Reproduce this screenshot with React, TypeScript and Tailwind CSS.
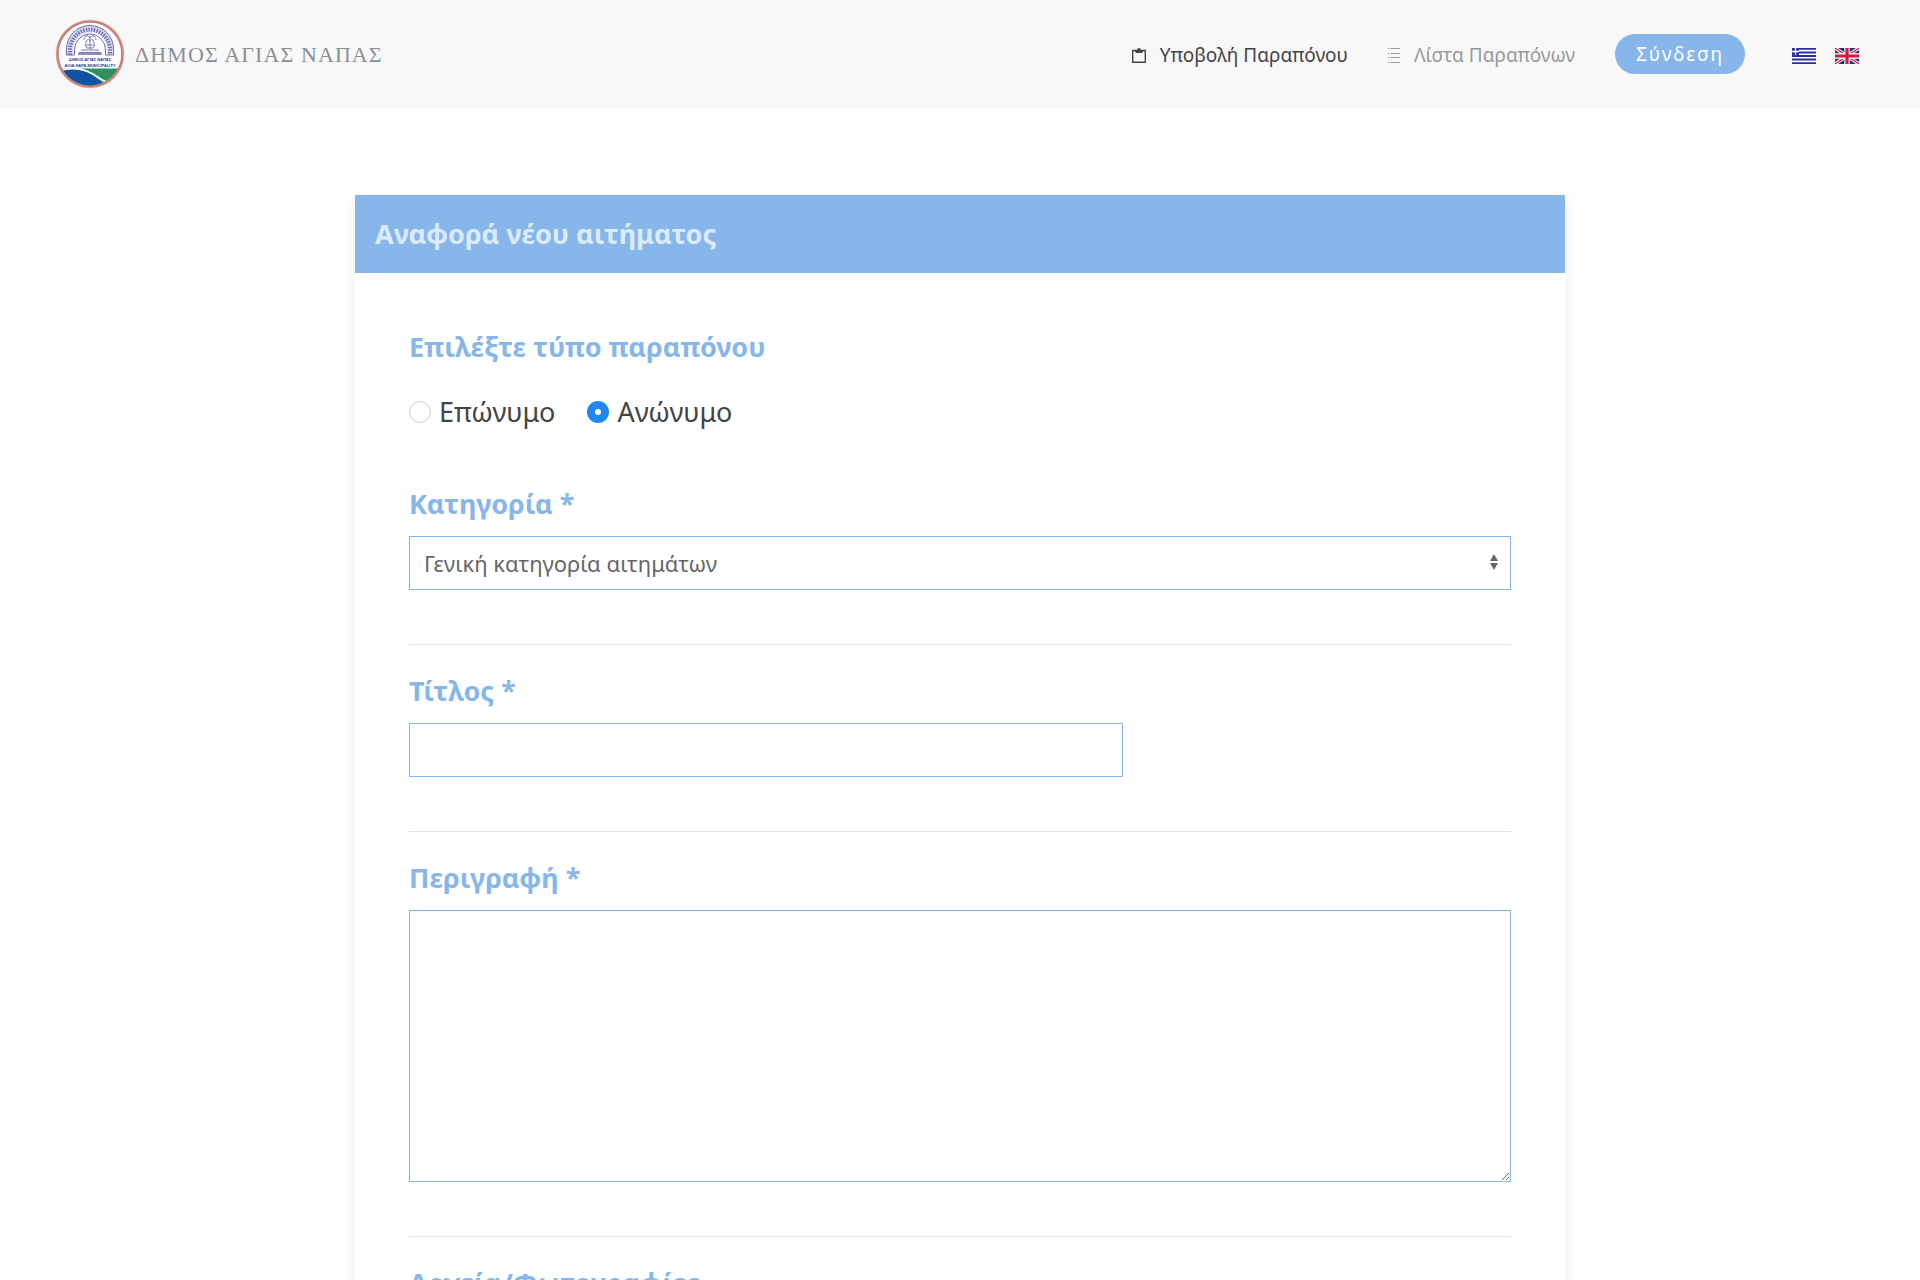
import { useState } from 'react';
import type { ReactNode } from 'react';

interface FieldProps {
  id: string;
  label: string;
  children: ReactNode;
}

const CATEGORIES = ['Γενική κατηγορία αιτημάτων'];

const COMPLAINT_TYPES = [
  { value: 'named', label: 'Επώνυμο' },
  { value: 'anonymous', label: 'Ανώνυμο' },
];

function Emblem() {
  return (
    <svg viewBox="0 0 70 70" className="w-[70px] h-[70px] shrink-0" aria-hidden="true">
      <defs>
        <clipPath id="emblem-disc">
          <circle cx="35" cy="35" r="31.5" />
        </clipPath>
      </defs>
      <circle cx="35" cy="35" r="34.5" fill="#ecd9d5" />
      <circle cx="35" cy="35" r="32.5" fill="#fff" stroke="#c9827a" strokeWidth="2.6" />
      <g clipPath="url(#emblem-disc)">
        <path d="M0 49.5H70V70H0Z" fill="#2f9160" />
        <path d="M0 51C18 47 31 51 40 58C46 62.500 49 66 56 68V70H0Z" fill="#0f52a5" />
        <path d="M2 52C20 47 31 50.500 41 57C48 61.500 51 64 58 65" fill="none" stroke="#fff" strokeWidth="1.800" />
      </g>
      {/* Arch */}
      <path d="M14.500 36V31A20.500 21 0 0 1 55.500 31V36" fill="none" stroke="#d9daef" strokeWidth="7" />
      <path d="M11.500 36V30A23.500 23.500 0 0 1 58.500 30V36H50.500V31A15.500 16 0 0 0 19.500 31V36Z" fill="none" stroke="#6e70b5" strokeWidth="1" />
      <path d="M15 36V31A20 20.500 0 0 1 55 31V36" fill="none" stroke="#6e70b5" strokeWidth="4" strokeDasharray="1.400 1.300" />
      {/* Fountain */}
      <g fill="none" stroke="#7779b8" strokeWidth="1">
        <path d="M35 30V17M35 19C32 15 29 17 29 21M35 19C38 15 41 17 41 21M35 22C33 19 31 21 31 25M35 22C37 19 39 21 39 25" />
        <path d="M30 26H40L38 29H32ZM26 31H44M24 33.500H46" />
      </g>
      <path d="M23 34H47V36H23Z" fill="#8b8dc6" />
      <text x="35" y="42" textAnchor="middle" fontSize="4" fontWeight="700" fill="#34368f" fontFamily="Liberation Sans, sans-serif">
        ΔΗΜΟΣ ΑΓΙΑΣ ΝΑΠΑΣ
      </text>
      <text x="35" y="47.500" textAnchor="middle" fontSize="4" fontWeight="700" fill="#34368f" fontFamily="Liberation Sans, sans-serif">
        AGIA NAPA MUNICIPALITY
      </text>
    </svg>
  );
}

function ClipboardIcon() {
  return (
    <svg viewBox="0 0 14 15" className="w-3.5 h-[15px]" aria-hidden="true">
      <path d="M.7 2.500H13.300V14.300H.7Z" fill="none" stroke="currentColor" strokeWidth="1.400" />
      <path d="M3 2H5.500V.3H8.500V2H11V3.500L10 5H4L3 3.500Z" fill="currentColor" />
    </svg>
  );
}

function ListIcon() {
  return (
    <svg viewBox="0 0 12 15" className="w-3 h-[15px]" fill="none" stroke="currentColor" aria-hidden="true">
      <path d="M2.500 .5H12M2.500 5.500H12M2.500 9.500H12M2.500 14.500H12" />
      <path d="M0 .5H1.300M0 5.500H1.300M0 9.500H1.300M0 14.500H1.300" />
    </svg>
  );
}

function GreekFlag() {
  return (
    <svg viewBox="0 0 24 16" className="w-6 h-4" aria-hidden="true">
      <path d="M0 0H24V16H0Z" fill="#fff" />
      <path d="M0 .9H24M0 4.500H24M0 8H24M0 11.500H24M0 15.100H24" stroke="#2a2fa0" strokeWidth="1.800" />
      <path d="M0 0H7V7H0Z" fill="#2a2fa0" />
      <path d="M3.500 0V7M0 3.500H7" stroke="#fff" strokeWidth="1.300" />
    </svg>
  );
}

function BritishFlag() {
  return (
    <svg viewBox="0 0 24 16" className="w-6 h-4" aria-hidden="true">
      <path d="M0 0H24V16H0Z" fill="#22307c" />
      <path d="M0 0L24 16M24 0L0 16" stroke="#fff" strokeWidth="3.400" />
      <path d="M0 0L24 16M24 0L0 16" stroke="#d8173c" strokeWidth="1.200" />
      <path d="M12 0V16M0 8H24" stroke="#fff" strokeWidth="5.400" />
      <path d="M12 0V16M0 8H24" stroke="#d8173c" strokeWidth="3.200" />
    </svg>
  );
}

function Field({ id, label, children }: FieldProps) {
  return (
    <div>
      <label htmlFor={id} className="block mb-3 text-[27px] leading-10 font-bold text-[#86b6ea]">
        {label}
      </label>
      {children}
    </div>
  );
}

function Divider() {
  return <hr className="mt-[54px] mb-[26px] border-t border-[#e5e5e5]" />;
}

function Header() {
  return (
    <header className="flex items-center justify-between h-[108px] pl-[55px] pr-[61px] bg-[#f8f8f8]">
      <a href="#" className="flex items-center gap-2.5">
        <Emblem />
        <span className="font-['Liberation_Serif',serif] text-[22px] tracking-wider text-[#8c8f92]">
          ΔΗΜΟΣ ΑΓΙΑΣ ΝΑΠΑΣ
        </span>
      </a>

      <nav className="flex items-center text-[19px]">
        <a href="#submit" className="flex items-center gap-3.5 pt-0.5 mr-10 text-[#444]">
          <ClipboardIcon />
          Υποβολή Παραπόνου
        </a>
        <a href="#list" className="flex items-center gap-3.5 pt-0.5 mr-10 text-[#999]">
          <ListIcon />
          Λίστα Παραπόνων
        </a>
        <button type="button" className="h-10 px-[21px] mr-[47px] rounded-full bg-[#86b6ea] text-[19px] tracking-widest text-white">
          Σύνδεση
        </button>
        <div className="flex items-center gap-[19px] pt-1">
          <a href="#el" aria-label="Ελληνικά"><GreekFlag /></a>
          <a href="#en" aria-label="English"><BritishFlag /></a>
        </div>
      </nav>
    </header>
  );
}

export default function App() {
  const [type, setType] = useState('anonymous');

  return (
    <div className="min-h-screen bg-white font-['Noto_Sans',sans-serif] text-[#444]">
      <Header />

      <main className="max-w-[1210px] mx-auto mt-[87px] bg-white shadow-[0_5px_15px_rgba(0,0,0,0.08)]">
        <div className="px-5 py-[19px] bg-[#86b6ea]">
          <h1 className="text-[27px] leading-10 font-bold text-[#dcebfb]">Αναφορά νέου αιτήματος</h1>
        </div>

        <form className="p-[54px]">
          <fieldset className="mb-[52px]">
            <legend className="mb-[25px] text-[27px] leading-10 font-bold text-[#86b6ea]">
              Επιλέξτε τύπο παραπόνου
            </legend>
            <div className="flex gap-8">
              {COMPLAINT_TYPES.map((item) => (
                <label key={item.value} className="flex items-center gap-2 text-[27px] leading-10">
                  <input
                    type="radio"
                    name="type"
                    value={item.value}
                    checked={type === item.value}
                    onChange={() => setType(item.value)}
                    className="appearance-none w-[22px] h-[22px] rounded-full border border-[#ccc] checked:border-[8px] checked:border-[#1e87f0] bg-white"
                  />
                  {item.label}
                </label>
              ))}
            </div>
          </fieldset>

          <Field id="category" label="Κατηγορία *">
            <div className="relative">
              <select
                id="category"
                className="block appearance-none w-full h-[54px] px-3.5 border border-[#86b6ea] bg-white text-[22px] text-[#666]"
              >
                {CATEGORIES.map((name) => (
                  <option key={name}>{name}</option>
                ))}
              </select>
              <svg viewBox="0 0 8 16" className="absolute right-[13px] top-[18px] w-2 h-4 pointer-events-none" aria-hidden="true">
                <path d="M0 7L4 0L8 7ZM0 9H8L4 16Z" fill="#666" />
              </svg>
            </div>
          </Field>
          <Divider />

          <Field id="title" label="Τίτλος *">
            <input id="title" type="text" className="block w-full max-w-[714px] h-[54px] px-3.5 border border-[#86b6ea] text-[22px]" />
          </Field>
          <Divider />

          <Field id="description" label="Περιγραφή *">
            <textarea id="description" className="block w-full h-[272px] px-3.5 py-2 border border-[#86b6ea] text-[22px] resize-y" />
          </Field>
          <Divider />

          <Field id="files" label="Αρχεία/Φωτογραφίες">
            <input id="files" type="file" multiple className="block w-full text-[22px]" />
          </Field>
        </form>
      </main>
    </div>
  );
}
